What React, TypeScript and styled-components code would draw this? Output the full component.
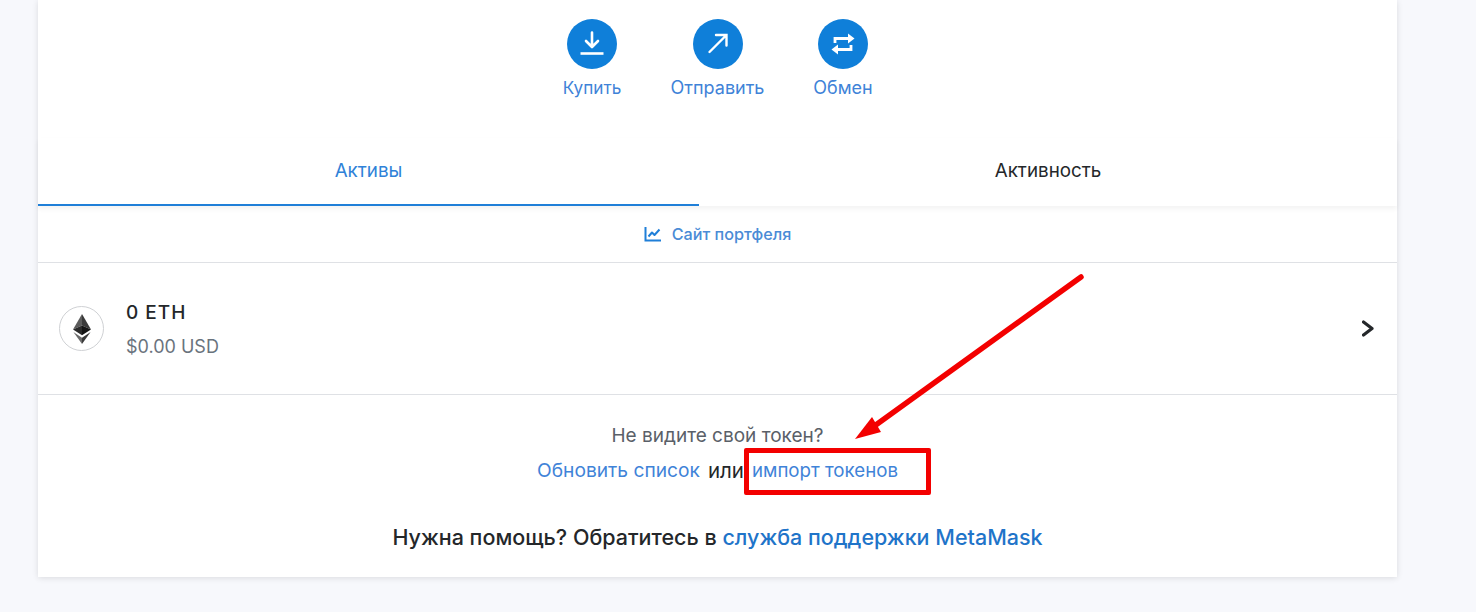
import styled, { createGlobalStyle } from 'styled-components';

const GlobalStyle = createGlobalStyle`
  html, body {
    margin: 0;
    padding: 0;
    background: #f7f8fc;
    font-family: Inter, "Noto Sans", "Liberation Sans", sans-serif;
  }
  * { box-sizing: border-box; }
`;

const Page = styled.div`
  position: relative;
  width: 1476px;
  height: 612px;
  padding: 0 79px 0 38px;
  overflow: hidden;
`;

const Card = styled.main`
  width: 1359px;
  height: 577px;
  background: #fff;
  box-shadow: 0 1px 6px rgba(0, 0, 0, 0.12);
`;

const Actions = styled.div`
  display: flex;
  justify-content: center;
  height: 138px;
  padding-top: 19px;
`;

const Action = styled.div`
  display: flex;
  flex-direction: column;
  align-items: center;
  width: 125.5px;
`;

const Circle = styled.div`
  width: 50px;
  height: 50px;
  border-radius: 50%;
  background: #0f7fd9;
  display: flex;
  align-items: center;
  justify-content: center;
`;

const ActionLabel = styled.span<{ $size?: number }>`
  margin-top: 8px;
  font-size: ${(p) => p.$size ?? 18}px;
  line-height: 22px;
  color: #3f83d8;
`;

const Tabs = styled.div`
  display: flex;
  height: 68px;
  box-shadow: 0 3px 5px rgba(0, 0, 0, 0.05);
`;

const Tab = styled.div<{ $active?: boolean }>`
  flex: ${(p) => (p.$active ? '0 0 661px' : '1')};
  display: flex;
  align-items: center;
  justify-content: center;
  padding-bottom: 2px;
  font-size: 18.8px;
  color: ${(p) => (p.$active ? '#2f82d8' : '#24272a')};
  border-bottom: 2px solid ${(p) => (p.$active ? '#1f7fd8' : 'transparent')};
`;

const PortfolioRow = styled.div`
  display: flex;
  align-items: center;
  justify-content: center;
  gap: 10px;
  height: 57px;
  border-bottom: 1px solid #dfe1e5;
  font-size: 16.2px;
  font-weight: 500;
  color: #4a8bd6;
`;

const AssetRow = styled.div`
  display: flex;
  align-items: center;
  height: 132px;
  padding: 0 22px 0 21px;
  border-bottom: 1px solid #dfe1e5;
`;

const TokenLogo = styled.div`
  width: 45px;
  height: 45px;
  border-radius: 50%;
  border: 1px solid #cfd1d4;
  display: flex;
  align-items: center;
  justify-content: center;
  flex: none;
`;

const AssetInfo = styled.div`
  flex: 1;
  display: flex;
  flex-direction: column;
  gap: 10px;
  margin-left: 22px;
  padding-top: 3px;
`;

const AssetAmount = styled.span`
  font-size: 19px;
  font-weight: 500;
  letter-spacing: 1px;
  line-height: 24px;
  color: #24272a;
`;

const AssetValue = styled.span`
  font-size: 18px;
  line-height: 24px;
  color: #6a737d;
`;

const Footer = styled.div`
  display: flex;
  flex-direction: column;
  align-items: center;
  padding-top: 29px;
`;

const Hint = styled.div`
  font-size: 19px;
  line-height: 24px;
  color: #5a6068;
`;

const RefreshLine = styled.div`
  display: flex;
  align-items: center;
  gap: 8px;
  height: 24px;
  margin-top: 10px;
  font-size: 19.2px;
  color: #24272a;
`;

const OrWord = styled.span`
  font-size: 20.5px;
`;

const Link = styled.a<{ $size?: number }>`
  color: #3f83d8;
  font-size: ${(p) => p.$size ?? 19.2}px;
`;

const HelpLine = styled.div`
  margin-top: 41px;
  font-size: 21.5px;
  line-height: 28px;
  font-weight: 500;
  color: #24272a;
`;

const HelpLink = styled.a`
  color: #1f74c9;
`;

const RedBox = styled.div`
  position: absolute;
  left: 744px;
  top: 448px;
  width: 187px;
  height: 47px;
  border: 5px solid #f30000;
  border-radius: 2px;
`;

const ArrowOverlay = styled.svg`
  position: absolute;
  left: 0;
  top: 0;
  pointer-events: none;
`;

const BuyIcon = () => (
  <svg width="26" height="26" viewBox="0 0 26 26" fill="none" stroke="#fff" strokeWidth="2.6">
    <path d="M13 1.5V15.5M7 10L13 16L19 10" strokeLinecap="round" strokeLinejoin="round" />
    <path d="M1.5 22.5H24.5" />
  </svg>
);

const SendIcon = () => (
  <svg width="26" height="26" viewBox="0 0 26 26" fill="none" stroke="#fff" strokeWidth="2.4">
    <path d="M4.5 21L20.5 5M11 4H21.5V14.5" strokeLinecap="round" />
  </svg>
);

const SwapIcon = () => (
  <svg width="26" height="26" viewBox="0 0 26 26" fill="none">
    <path d="M5 12V7.5H19" stroke="#fff" strokeWidth="2.8" />
    <path d="M18 2.5L24.5 7.5L18 12.5Z" fill="#fff" />
    <path d="M21 14V18.5H7" stroke="#fff" strokeWidth="2.8" />
    <path d="M8 13.5L1.5 18.5L8 23.5Z" fill="#fff" />
  </svg>
);

const ChartIcon = () => (
  <svg width="18" height="16" viewBox="0 0 18 16" fill="none" stroke="#1f7fd8" strokeWidth="2">
    <path d="M1.5 1V14.5H17" />
    <path d="M4.5 10.5L8 6.5L10.5 9L15.5 3.5" strokeLinejoin="round" />
  </svg>
);

const EthIcon = () => (
  <svg width="18" height="30" viewBox="0 0 22 31" preserveAspectRatio="none">
    <path d="M11 0L0 16L11 12Z" fill="#5c5c5c" />
    <path d="M11 0L22 16L11 12Z" fill="#3a3a3a" />
    <path d="M11 12L0 16L11 22Z" fill="#2a2a2a" />
    <path d="M11 12L22 16L11 22Z" fill="#141414" />
    <path d="M0.5 18.5L11 24.5V31Z" fill="#6b6b6b" />
    <path d="M21.5 18.5L11 24.5V31Z" fill="#3a3a3a" />
  </svg>
);

const Chevron = () => (
  <svg width="13" height="18" viewBox="0 0 13 18" fill="none" stroke="#24272a" strokeWidth="3.2">
    <path d="M1.5 2L10 8.5L1.5 15" strokeLinecap="round" strokeLinejoin="round" />
  </svg>
);

const App = () => {
  return (
    <>
      <GlobalStyle />
      <Page>
        <Card>
          <Actions>
            <Action>
              <Circle>
                <BuyIcon />
              </Circle>
              <ActionLabel $size={17.2}>Купить</ActionLabel>
            </Action>
            <Action>
              <Circle>
                <SendIcon />
              </Circle>
              <ActionLabel>Отправить</ActionLabel>
            </Action>
            <Action>
              <Circle>
                <SwapIcon />
              </Circle>
              <ActionLabel>Обмен</ActionLabel>
            </Action>
          </Actions>
          <Tabs>
            <Tab $active>Активы</Tab>
            <Tab>Активность</Tab>
          </Tabs>
          <PortfolioRow>
            <ChartIcon />
            Сайт портфеля
          </PortfolioRow>
          <AssetRow>
            <TokenLogo>
              <EthIcon />
            </TokenLogo>
            <AssetInfo>
              <AssetAmount>0 ETH</AssetAmount>
              <AssetValue>$0.00 USD</AssetValue>
            </AssetInfo>
            <Chevron />
          </AssetRow>
          <Footer>
            <Hint>Не видите свой токен?</Hint>
            <RefreshLine>
              <Link>Обновить список</Link>
              <OrWord>или</OrWord>
              <Link $size={18.7}>импорт токенов</Link>
            </RefreshLine>
            <HelpLine>
              Нужна помощь? Обратитесь в <HelpLink>служба поддержки MetaMask</HelpLink>
            </HelpLine>
          </Footer>
        </Card>
        <RedBox />
        <ArrowOverlay width="1476" height="612" viewBox="0 0 1476 612">
          <path d="M1081 277L873 427" stroke="#f30000" strokeWidth="5.5" strokeLinecap="round" />
          <path d="M855 439L872 417L881 432Z" fill="#f30000" />
        </ArrowOverlay>
      </Page>
    </>
  );
};

export default App;
